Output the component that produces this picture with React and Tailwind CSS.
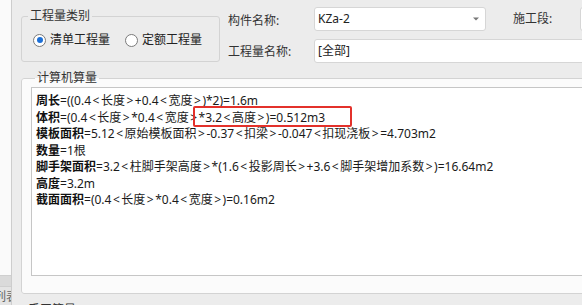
import React from 'react';

const font = {
  fontFamily: '"Noto Sans", "Noto Sans CJK SC", sans-serif',
};

const calcLines = [
  { label: '周长', body: '=((0.4<长度>+0.4<宽度>)*2)=1.6m' },
  { label: '体积', body: '=(0.4<长度>*0.4<宽度>*3.2<高度>)=0.512m3' },
  { label: '模板面积', body: '=5.12<原始模板面积>-0.37<扣梁>-0.047<扣现浇板>=4.703m2' },
  { label: '数量', body: '=1根' },
  { label: '脚手架面积', body: '=3.2<柱脚手架高度>*(1.6<投影周长>+3.6<脚手架增加系数>)=16.64m2' },
  { label: '高度', body: '=3.2m' },
  { label: '截面面积', body: '=(0.4<长度>*0.4<宽度>)=0.16m2' },
];

// the < > glyphs in the original font sit with wide side bearings
function Formula({ text }) {
  return text.split(/([<>])/).map((part, i) =>
    part === '<' || part === '>' ? (
      <span key={i} className="mx-[1.5px]">
        {part}
      </span>
    ) : (
      <React.Fragment key={i}>{part}</React.Fragment>
    )
  );
}

function Radio({ checked, label }) {
  return (
    <label className="flex items-center gap-[4px]">
      <span className="flex h-[13px] w-[13px] items-center justify-center rounded-full border border-[#7a7a7a] bg-white">
        {checked && <span className="h-[6px] w-[6px] rounded-full bg-[#1c6fd6]" />}
      </span>
      <span>{label}</span>
    </label>
  );
}

export default function App() {
  return (
    <div
      style={font}
      className="flex h-[305px] w-[582px] overflow-hidden bg-[#ececec] text-[12px] text-[#222]"
    >
      {/* left panel edge */}
      <div className="flex w-[12px] shrink-0 flex-col border-r border-[#cdcdcd] bg-[#fafafa]">
        <div className="flex-1" />
        <div className="h-[12px] border-y border-[#cfcfcf] bg-[#dadada]" />
        <div className="flex h-[18px] justify-end overflow-hidden bg-[#e4e4e4] pt-[1px] text-[#666]">
          <span className="mr-[-7px] whitespace-nowrap">构件列表</span>
        </div>
      </div>

      {/* main */}
      <div className="flex min-w-0 flex-1 flex-col pl-[9px]">
        <div className="flex h-[71px] shrink-0 items-start">
          <fieldset className="mt-[9px] h-[53px] w-[199px] shrink-0 rounded-[3px] border border-[#d3d3d3] pl-[11px]">
            <legend className="ml-[-5px] px-[2px] leading-[14px] text-[#333]">工程量类别</legend>
            <div className="mt-[8px] flex items-center gap-[15px] text-[12px] text-[#222]">
              <Radio checked label="清单工程量" />
              <Radio label="定额工程量" />
            </div>
          </fieldset>

          <div className="ml-[8px] flex w-[86px] shrink-0 flex-col pt-[13px] text-[#333]">
            <span className="leading-[16px]">构件名称:</span>
            <span className="mt-[15px] leading-[16px]">工程量名称:</span>
          </div>

          <div className="flex min-w-0 flex-1 flex-col pt-[7px]">
            <div className="flex items-center">
              <div className="flex h-[24px] w-[172px] shrink-0 items-center justify-between rounded-[3px] border border-[#d6d6d6] bg-white pl-[3px] pr-[6px]">
                <span>KZa-2</span>
                <svg width="6" height="4" viewBox="0 0 6 4" className="mb-[1px]">
                  <path d="M0 0.5h6L3 3.5z" fill="#777" />
                </svg>
              </div>
              <span className="ml-[27px] shrink-0 text-[#333]">施工段:</span>
              <div className="ml-[28px] h-[24px] w-[40px] shrink-0 rounded-[3px] border border-[#d6d6d6] bg-white" />
            </div>
            <div className="mt-[8px] flex h-[24px] w-[300px] items-center rounded-[3px] border border-[#d6d6d6] bg-white pl-[3px]">
              [全部]
            </div>
          </div>
        </div>

        <fieldset className="mr-[-10px] h-[223px] shrink-0 rounded-[3px] border border-[#d3d3d3] bg-[#fbfbfb] pl-[9px] pb-[8px]">
          <legend className="ml-[4px] px-[2px] leading-[14px] text-[#333]">计算机算量</legend>
          <div className="relative mt-[2px] h-[189px] border border-[#c6c6c6] bg-white pl-[4px] pt-[5px] text-[#1a1a1a]">
            {calcLines.map((line) => (
              <div key={line.label} className="whitespace-nowrap leading-[16.5px]">
                <span className="font-bold text-[#111]">{line.label}</span>
                <Formula text={line.body} />
              </div>
            ))}
            <div className="absolute left-[161px] top-[18px] h-[21px] w-[159px] rounded-[2px] border-2 border-[#e3312b]" />
          </div>
        </fieldset>

        <fieldset className="mr-[-10px] mt-[9px] h-[40px] shrink-0 rounded-[3px] border border-[#d3d3d3] bg-[#fbfbfb]">
          <legend className="ml-[4px] px-[2px] leading-[14px] text-[#333]">手工算量</legend>
        </fieldset>
      </div>
    </div>
  );
}
